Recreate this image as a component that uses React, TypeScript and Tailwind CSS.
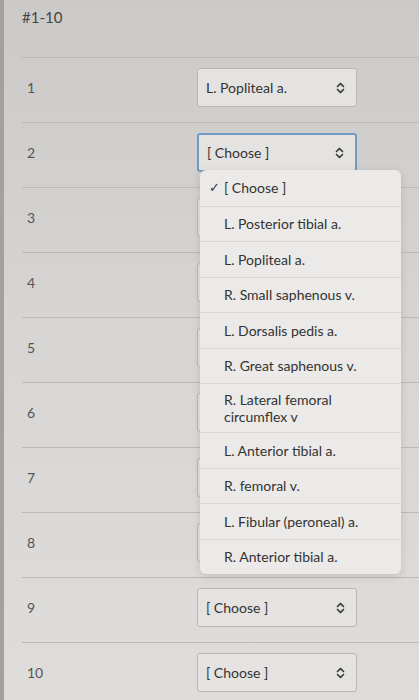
import React from 'react';

const options = [
  '[ Choose ]',
  'L. Posterior tibial a.',
  'L. Popliteal a.',
  'R. Small saphenous v.',
  'L. Dorsalis pedis a.',
  'R. Great saphenous v.',
  'R. Lateral femoral circumflex v',
  'L. Anterior tibial a.',
  'R. femoral v.',
  'L. Fibular (peroneal) a.',
  'R. Anterior tibial a.',
];

// rows 3-8 sit under the open menu, their values can't be seen
const rows = [
  { n: '1', value: 'L. Popliteal a.' },
  { n: '2', value: '[ Choose ]', open: true },
  { n: '3', value: '' },
  { n: '4', value: '' },
  { n: '5', value: '' },
  { n: '6', value: '' },
  { n: '7', value: '' },
  { n: '8', value: '' },
  { n: '9', value: '[ Choose ]' },
  { n: '10', value: '[ Choose ]' },
];

const Chevrons = () => (
  <svg width="9" height="12" viewBox="0 0 9 12" fill="none" stroke="#3a3a3a" strokeWidth="1.7" strokeLinecap="round" strokeLinejoin="round">
    <path d="M1.5 4.5 L4.5 1.5 L7.5 4.5" />
    <path d="M1.5 7.5 L4.5 10.5 L7.5 7.5" />
  </svg>
);

const Menu = () => (
  <div className="absolute left-[3px] top-[calc(100%-2px)] z-10 w-[201px] rounded-md bg-[#ebeae8] shadow-[0_2px_8px_rgba(0,0,0,0.12)]">
    {options.map((opt, i) => (
      <div
        key={opt}
        className={`flex items-center pr-3 text-[14px] leading-[17px] text-[#333] ${
          i === 0 ? 'pl-[9px]' : 'pl-[24px]'
        } ${i === 6 ? 'py-[7px] min-h-[47px]' : 'h-[35.5px]'} ${
          i > 0 ? 'border-t border-[#d9d8d6]' : ''
        }`}
      >
        {i === 0 && <span className="mr-[4px] text-[13px]">✓</span>}
        <span>{opt}</span>
      </div>
    ))}
  </div>
);

export default function App() {
  return (
    <div className="min-h-[700px] w-[419px] overflow-hidden border-l-[4px] border-[#a3a19f] bg-gradient-to-b from-[#cccac8] via-[#d8d6d4] to-[#dfdddb] font-['Lato',sans-serif]">
      <div className="h-[57px] pl-[18px] pt-[6px] text-[15px] text-[#444]">#1-10</div>
      <div className="pl-[18px]">
        {rows.map((r) => (
          <div key={r.n} className="flex h-[65px] items-center border-t border-[#bcbab8] pb-[5px]">
            <div className="w-[175px] pl-[5px] text-[14px] text-[#555]">{r.n}</div>
            <div className="relative">
              <div
                className={`flex h-[39px] w-[160px] items-center justify-between rounded-[3px] bg-[#e4e3e1] pl-[8px] pr-[11px] text-[14px] text-[#333] ${
                  r.open ? 'border-2 border-[#6e9cc6]' : 'border border-[#b9b7b5]'
                }`}
              >
                <span>{r.value}</span>
                <Chevrons />
              </div>
              {r.open && <Menu />}
            </div>
          </div>
        ))}
      </div>
    </div>
  );
}
